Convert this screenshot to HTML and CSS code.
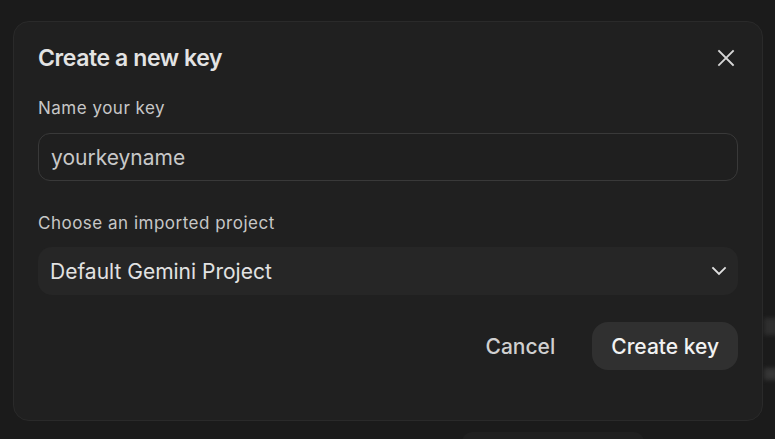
FILE: index.html
```html
<!DOCTYPE html>
<html lang="en">
<head>
<meta charset="utf-8">
<title>Create a new key</title>
<link rel="stylesheet" href="styles.css">
</head>
<body>
<div class="backdrop">
  <div class="bg-blob blob-a"></div>
  <div class="bg-blob blob-b"></div>
  <div class="bg-blob blob-c"></div>
</div>
<div class="dialog" role="dialog" aria-labelledby="dlg-title">
  <div class="dialog-header">
    <h2 id="dlg-title" class="dialog-title">Create a new key</h2>
    <button class="icon-btn" aria-label="Close">
      <svg width="18" height="18" viewBox="0 0 18 18" fill="none" stroke="#d6d6d6" stroke-width="1.8" stroke-linecap="square">
        <path d="M2 2 L16 16 M16 2 L2 16"/>
      </svg>
    </button>
  </div>
  <label class="field-label" for="keyname">Name your key</label>
  <div class="text-input" id="keyname">yourkeyname</div>
  <label class="field-label second">Choose an imported project</label>
  <div class="select">
    <span class="select-value">Default Gemini Project</span>
    <svg class="chevron" width="16" height="10" viewBox="0 0 16 10" fill="none" stroke="#e0e0e0" stroke-width="1.8" stroke-linecap="square">
      <path d="M2 2 L8 8 L14 2"/>
    </svg>
  </div>
  <div class="actions">
    <button class="btn btn-text">Cancel</button>
    <button class="btn btn-filled">Create key</button>
  </div>
</div>
</body>
</html>
```

FILE: styles.css
```css
* { box-sizing: border-box; }
html, body {
  margin: 0;
  padding: 0;
  width: 775px;
  height: 439px;
  overflow: hidden;
  background: #1b1b1b;
  font-family: Inter, "Noto Sans", sans-serif;
}
body {
  padding: 21px 12px 0 13px;
  position: relative;
}
.backdrop { position: absolute; inset: 0; }
.bg-blob {
  position: absolute;
  filter: blur(2px);
}
.blob-a { left: 764px; top: 318px; width: 14px; height: 17px; background: #2f2f2f; }
.blob-b { left: 764px; top: 368px; width: 14px; height: 12px; background: #363636; }
.blob-c { left: 462px; top: 432px; width: 182px; height: 20px; border-radius: 10px; background: #202020; filter: none; }

.dialog {
  position: relative;
  width: 750px;
  height: 400px;
  background: #202020;
  border: 1px solid #2a2a2a;
  border-radius: 16px;
  padding: 22px 24px 0 24px;
  display: flex;
  flex-direction: column;
}
.dialog-header {
  display: flex;
  align-items: center;
  justify-content: space-between;
  height: 28px;
}
.dialog-title {
  margin: 0;
  font-size: 23px;
  font-weight: 600;
  letter-spacing: -0.4px;
  color: #e3e3e3;
  line-height: 28px;
}
.icon-btn {
  background: none;
  border: none;
  padding: 0;
  width: 18px;
  height: 18px;
  margin-right: 3px;
  display: flex;
}
.field-label {
  display: block;
  margin-top: 26px;
  font-size: 17px;
  letter-spacing: 0.5px;
  line-height: 20px;
  color: #c7c7c7;
}
.field-label.second { margin-top: 32px; }
.text-input {
  margin-top: 15px;
  height: 48px;
  border: 1px solid #393939;
  border-radius: 12px;
  background: #1f1f1f;
  padding: 0 12px;
  display: flex;
  align-items: center;
  font-size: 21px;
  color: #c8c8c8;
}
.select {
  margin-top: 14px;
  height: 48px;
  border-radius: 14px;
  background: #262626;
  padding: 0 12px;
  display: flex;
  align-items: center;
  justify-content: space-between;
  font-size: 21px;
  color: #e2e2e2;
}
.chevron { margin-right: -1px; }
.actions {
  margin-top: 27px;
  display: flex;
  justify-content: flex-end;
  align-items: center;
  gap: 14px;
}
.btn {
  font-family: inherit;
  font-size: 21px;
  border: none;
  height: 48px;
  border-radius: 16px;
  cursor: pointer;
  font-weight: 500;
}
.btn-text {
  background: none;
  color: #d0d0d0;
  padding: 0 23px;
}
.btn-filled {
  background: #303030;
  color: #f2f2f2;
  padding: 0 19px;
}
```
